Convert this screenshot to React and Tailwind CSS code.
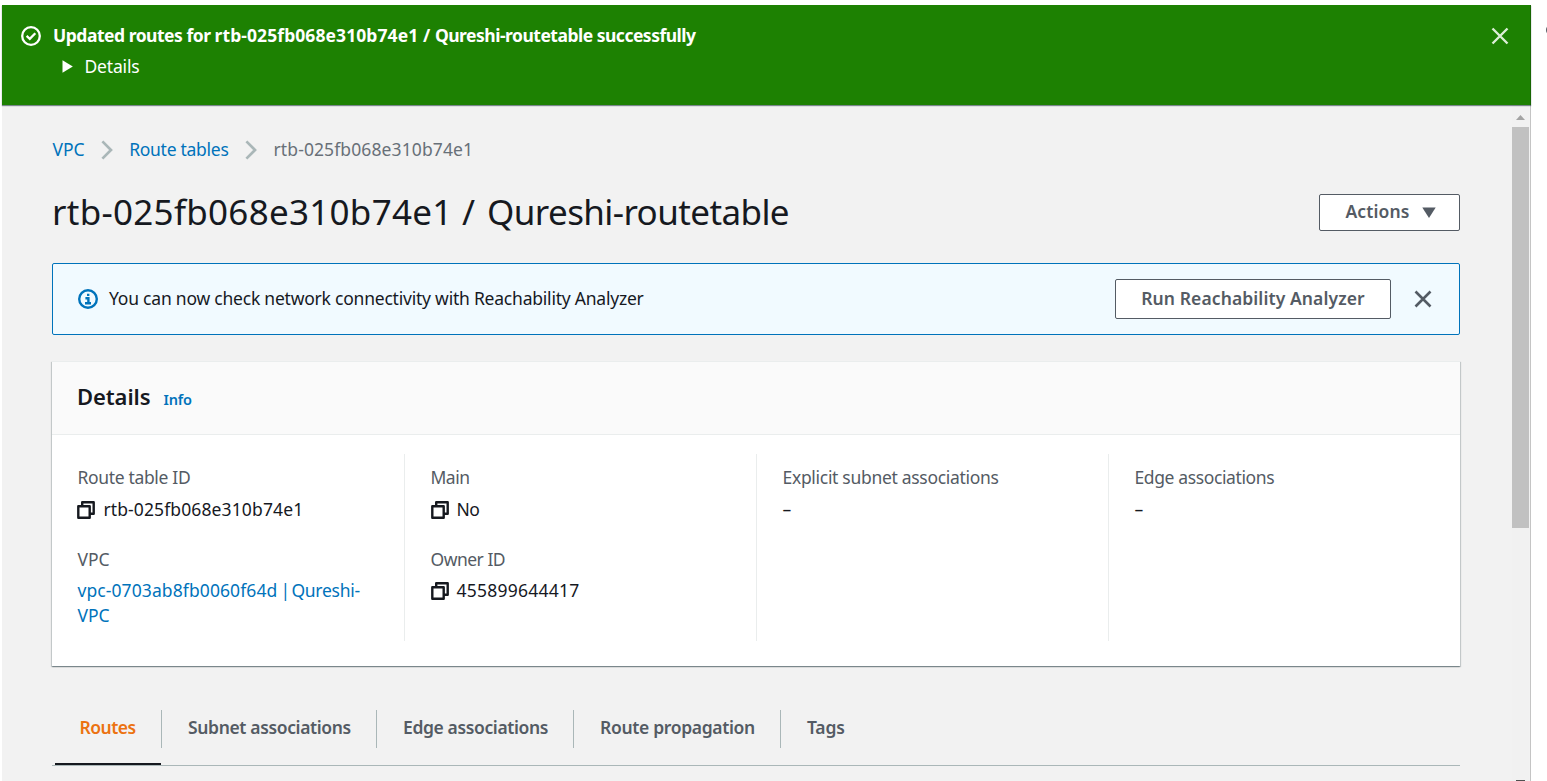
const Chevron = () => (
  <svg className="shrink-0" width="12" height="20" viewBox="0 0 12 20" fill="none" stroke="#aab7b8" strokeWidth="2.7">
    <path d="M1.4 1.4 10 10 1.4 18.6" />
  </svg>
);

const CloseIcon = ({ className, strokeWidth = 2.6 }) => (
  <svg className={className} width="18" height="18" viewBox="0 0 18 18" fill="none" stroke="currentColor" strokeWidth={strokeWidth}>
    <path d="M1.5 1.5 16.5 16.5M16.5 1.5 1.5 16.5" />
  </svg>
);

const CopyIcon = () => (
  <svg className="shrink-0" width="18" height="18" viewBox="0 0 18 18" fill="none" stroke="#16191f" strokeWidth="2.4" strokeLinejoin="round">
    <path d="M1.3 5.2h11.4v11.5H1.3z" />
    <path d="M5.2 5V1.3h11.5v11.4H13" />
  </svg>
);

const CheckCircle = () => (
  <svg className="shrink-0" width="20" height="20" viewBox="0 0 20 20" fill="none" stroke="#fff" strokeWidth="2.3">
    <circle cx="10" cy="10" r="8.8" />
    <path d="M5.6 9.9 8.8 12.9 14.3 7.2" />
  </svg>
);

const InfoCircle = () => (
  <svg className="shrink-0" width="20" height="20" viewBox="0 0 20 20" fill="none" stroke="#0073bb" strokeWidth="2.4">
    <circle cx="10" cy="10" r="8.8" />
    <path d="M10.2 4.7v2.4M7.4 9.2h3v5M7 14.2h6" />
  </svg>
);

const Label = ({ children, className }) => (
  <div className={`text-[#545b64] whitespace-nowrap ${className}`}>{children}</div>
);

const Copyable = ({ children, className }) => (
  <div className="flex h-[25px] items-center gap-[8px]">
    <CopyIcon />
    <span className={className}>{children}</span>
  </div>
);

const tabs = [
  { name: "Subnet associations", cls: "w-[215px] tracking-[-0.36px] border-r" },
  { name: "Edge associations", cls: "w-[197px] tracking-[-0.37px] border-r" },
  { name: "Route propagation", cls: "w-[207px] tracking-[-0.33px] border-r" },
  { name: "Tags", cls: "w-[90px] tracking-[-0.2px]" },
];

export default function App() {
  return (
    <div className="relative flex h-[781px] w-[1547px] flex-col overflow-hidden bg-white pt-[5px] pl-[2px] font-['Noto_Sans',sans-serif] text-[17.5px] leading-[25px] text-[#16191f]">
      <div className="relative z-10 flex h-[100px] w-[1529px] shrink-0 items-start border-r border-[#176502] bg-[#1d8102] pt-[18px] pr-[21px] pl-[19px] text-white shadow-[0_1px_1px_rgba(0,28,36,0.5)]">
        <div className="flex h-[26px] items-center">
          <CheckCircle />
        </div>
        <div className="ml-[12px] flex flex-1 flex-col gap-[6px]">
          <div className="font-bold whitespace-nowrap">
            <span className="tracking-[-0.48px]">Updated routes for </span>
            <span className="tracking-[0.08px]">rtb-025fb068e310b74e1 / </span>
            <span className="tracking-[-0.5px]">Qureshi-routetable successfully</span>
          </div>
          <div className="flex items-center pl-[9px] tracking-[-0.17px]">
            <svg width="11" height="13" viewBox="0 0 11 13" fill="#fff">
              <path d="M0.5 0.3 10.8 6.5 0.5 12.7z" />
            </svg>
            <span className="ml-[11.5px]">Details</span>
          </div>
        </div>
        <CloseIcon className="mt-1 text-[#dbeed6]" strokeWidth={2.4} />
      </div>

      <div className="flex w-[1529px] flex-1 border-r border-[#c4c4c4] bg-[#f2f2f2]">
        <main className="flex w-[1510px] shrink-0 flex-col pr-[52px] pl-[50px]">
          <nav className="mt-8 flex h-[25px] items-center">
            <a className="pl-[0.5px] text-[#0073bb]">VPC</a>
            <span className="ml-[16px] flex"><Chevron /></span>
            <a className="ml-[16.5px] tracking-[-0.28px] text-[#0073bb]">Route tables</a>
            <span className="ml-[16px] flex"><Chevron /></span>
            <span className="ml-[17px] tracking-[0.11px] text-[#687078]">rtb-025fb068e310b74e1</span>
          </nav>

          <div className="mt-[27px] flex h-11 items-center justify-between">
            <h1 className="mt-[2px] text-[35px] leading-[44px] whitespace-nowrap">
              <span className="tracking-[0.28px]">rtb-025fb068e310b74e1 </span>
              <span className="tracking-[1.5px]">/ </span>
              <span className="tracking-[-0.6px]">Qureshi-routetable</span>
            </h1>
            <button className="mt-[3px] flex h-[37px] w-[141px] items-center rounded-[2px] border border-[#545b64] bg-white pl-[25.5px] font-semibold tracking-[0.1px] text-[#545b64]">
              <span className="pb-[2px]">Actions</span>
              <svg className="ml-[13px]" width="14" height="11" viewBox="0 0 14 11" fill="#545b64">
                <path d="M0.3 0.5h13.4L7 11z" />
              </svg>
            </button>
          </div>

          <section className="mt-[30px] flex h-[72px] shrink-0 items-center rounded-[2px] border border-[#0073bb] bg-[#f1faff] pr-[27px] pl-[25px]">
            <InfoCircle />
            <span className="ml-[11px] flex-1 pb-[2px] tracking-[-0.22px]">You can now check network connectivity with Reachability Analyzer</span>
            <button className="h-10 w-[276px] rounded-[2px] border border-[#545b64] bg-white pb-[2px] font-semibold tracking-[0.1px] text-[#545b64]">
              Run Reachability Analyzer
            </button>
            <CloseIcon className="ml-[23px] text-[#545b64]" />
          </section>

          <section className="mt-[26px] h-[305px] shrink-0 bg-white shadow-[0_1px_1px_rgba(0,28,36,0.3),1px_1px_1px_rgba(0,28,36,0.15),-1px_1px_1px_rgba(0,28,36,0.15)]">
            <header className="flex h-[74px] items-baseline border-t border-b border-[#eaeded] bg-[#fafafa] pt-[19px] pl-[25px]">
              <h2 className="text-[22px] leading-[31px] font-semibold tracking-[-0.1px]">Details</h2>
              <a className="ml-[13px] text-[14.5px] font-semibold tracking-[-0.1px] text-[#0073bb]">Info</a>
            </header>
            <div className="mt-[19px] grid h-[187px] grid-cols-[353px_352px_352px_1fr] divide-x divide-[#eaeded]">
              <div className="pt-[11px] pl-[25.4px]">
                <Label className="tracking-[-0.33px]">Route table ID</Label>
                <div className="mt-[7px]"><Copyable className="tracking-[0.12px]">rtb-025fb068e310b74e1</Copyable></div>
                <Label className="mt-[25px]">VPC</Label>
                <a className="mt-[6px] block w-[300px] text-[#0073bb]">
                  <span className="tracking-[0.1px]">vpc-0703ab8fb0060f64d</span>
                  <span className="tracking-[-1.6px]"> | </span>
                  <span className="tracking-[-0.25px]">Qureshi-</span><br />VPC
                </a>
              </div>
              <div className="pt-[11px] pl-[25.5px]">
                <Label className="tracking-[-0.5px]">Main</Label>
                <div className="mt-[7px]"><Copyable className="tracking-[-0.5px]">No</Copyable></div>
                <Label className="mt-[25px] tracking-[-0.5px]">Owner ID</Label>
                <div className="mt-[6px]"><Copyable className="tracking-[0.23px]">455899644417</Copyable></div>
              </div>
              <div className="pt-[11px] pl-[25.5px]">
                <Label className="tracking-[-0.3px]">Explicit subnet associations</Label>
                <div className="mt-[7px]">–</div>
              </div>
              <div className="pt-[11px] pl-[25.5px]">
                <Label className="tracking-[-0.38px]">Edge associations</Label>
                <div className="mt-[7px]">–</div>
              </div>
            </div>
          </section>

          <div className="mt-[44px] flex h-[56px] shrink-0 border-b border-[#aab7b8] font-semibold text-[#545b64]">
            <div className="ml-[3px] h-[55px] w-[106px] shrink-0 border-b-2 border-[#16191f] pt-[5px] pl-[24.5px] tracking-[-0.5px] text-[#ec7211]">Routes</div>
            <div className="h-[38px] w-px shrink-0 bg-[#aab7b8]" />
            {tabs.map((t) => (
              <div key={t.name} className={`h-[38px] border-[#aab7b8] pt-[5px] pl-[26px] whitespace-nowrap ${t.cls}`}>{t.name}</div>
            ))}
          </div>
        </main>
        <div className="flex w-[17px] shrink-0 flex-col items-center bg-[#f1f1f1] pt-[10px]">
          <svg width="9" height="5" viewBox="0 0 9 5" fill="#a3a3a3">
            <path d="M4.5 0 9 5H0z" />
          </svg>
          <div className="mt-[7px] h-[401px] w-[17px] bg-[#c1c1c1]" />
          <div className="mt-auto h-px w-[9px] bg-[#505050]" />
        </div>
      </div>
      <svg className="absolute top-[24px] left-[1546px]" width="12" height="12" viewBox="0 0 12 12" fill="none" stroke="#545b64" strokeWidth="2">
        <circle cx="6" cy="6" r="5" />
      </svg>
    </div>
  );
}
